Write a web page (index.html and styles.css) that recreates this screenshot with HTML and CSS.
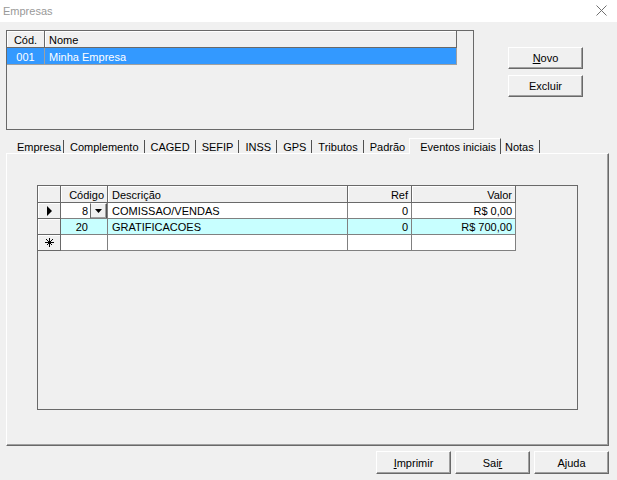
FILE: index.html
```html
<!DOCTYPE html>
<html>
<head>
<meta charset="utf-8">
<title>Empresas</title>
<link rel="stylesheet" href="styles.css">
</head>
<body>
<div class="window">
  <div class="titlebar">
    <span class="title">Empresas</span>
    <svg class="close" width="11" height="11" viewBox="0 0 11 11"><path d="M0.5 0.5L10.5 10.5M10.5 0.5L0.5 10.5" stroke="#707070" stroke-width="1" fill="none"/></svg>
  </div>

  <div class="top">
    <div class="listbox">
      <div class="lb-line">
        <div class="hcell lb-cod">Cód.</div>
        <div class="hcell lb-nome">Nome</div>
      </div>
      <div class="lb-line selected">
        <div class="lcell lb-cod">001</div>
        <div class="lcell lb-nome">Minha Empresa</div>
      </div>
    </div>
    <div class="side-buttons">
      <button class="btn"><u>N</u>ovo</button>
      <button class="btn">Excluir</button>
    </div>
  </div>

  <div class="tabs">
    <div class="tab">Empresa</div>
    <div class="tab">Complemento</div>
    <div class="tab">CAGED</div>
    <div class="tab">SEFIP</div>
    <div class="tab">INSS</div>
    <div class="tab">GPS</div>
    <div class="tab">Tributos</div>
    <div class="tab">Padrão</div>
    <div class="tab active">Eventos iniciais</div>
    <div class="tab">Notas</div>
  </div>

  <div class="panel">
    <div class="grid">
      <div class="c h"></div>
      <div class="c h num">Código</div>
      <div class="c h">Descrição</div>
      <div class="c h num">Ref</div>
      <div class="c h num">Valor</div>

      <div class="c h ind"><svg width="6" height="10" viewBox="0 0 6 10"><path d="M0 0L5 5L0 10Z" fill="#000"/></svg></div>
      <div class="c w cod"><span>8</span><span class="dd"><svg width="7" height="4" viewBox="0 0 7 4"><path d="M0 0H7L3.5 4Z" fill="#000"/></svg></span></div>
      <div class="c w">COMISSAO/VENDAS</div>
      <div class="c w num">0</div>
      <div class="c w num">R$ 0,00</div>

      <div class="c h ind"></div>
      <div class="c cy cod cod-plain">20</div>
      <div class="c cy">GRATIFICACOES</div>
      <div class="c cy num">0</div>
      <div class="c cy num">R$ 700,00</div>

      <div class="c h ind"><svg width="9" height="9" viewBox="0 0 9 9" shape-rendering="crispEdges"><path d="M4.5 0V9M0 4.5H9M1.5 1.5L7.5 7.5M7.5 1.5L1.5 7.5" stroke="#000" stroke-width="1" fill="none"/></svg></div>
      <div class="c w"></div>
      <div class="c w"></div>
      <div class="c w"></div>
      <div class="c w"></div>
    </div>
  </div>

  <div class="bottom">
    <button class="btn big"><u>I</u>mprimir</button>
    <button class="btn big">Sai<u>r</u></button>
    <button class="btn big">Ajuda</button>
  </div>
</div>
</body>
</html>
```

FILE: styles.css
```css
html, body {
  margin: 0;
  padding: 0;
}
body {
  background: #f0f0f0;
  font-family: "Liberation Sans", Arial, sans-serif;
  font-size: 11px;
  color: #000;
}
.window {
  width: 617px;
  height: 480px;
  overflow: hidden;
}

/* title bar */
.titlebar {
  height: 22px;
  background: #fff;
  display: flex;
  align-items: center;
  justify-content: space-between;
  padding: 0 10px 1px 3px;
  box-sizing: border-box;
}
.title {
  color: #999;
  font-size: 11px;
}
.close {
  display: block;
}

/* top area */
.top {
  display: flex;
  align-items: flex-start;
  padding: 8px 0 0 6px;
}
.listbox {
  width: 468px;
  height: 100px;
  box-sizing: border-box;
  border: 1px solid #696969;
  background: #f0f0f0;
}
.lb-line {
  display: flex;
  width: 450px;
  height: 17px;
}
.hcell, .lcell {
  box-sizing: border-box;
  height: 17px;
  line-height: 18px;
  white-space: nowrap;
  overflow: hidden;
}
.hcell {
  border-right: 1px solid #696969;
  border-bottom: 1px solid #696969;
  box-shadow: inset 1px 1px #fff;
}
.lcell {
  border-right: 1px solid #a0a0a0;
  border-bottom: 1px solid #a0a0a0;
}
.lb-cod {
  width: 38px;
  text-align: center;
}
.lb-nome {
  width: 412px;
  padding-left: 4px;
}
.lb-line.selected {
  background: #3399ff;
  color: #fff;
}

.side-buttons {
  display: flex;
  flex-direction: column;
  gap: 6px;
  margin: 17px 0 0 34px;
}
.btn {
  width: 75px;
  height: 22px;
  box-sizing: border-box;
  padding: 0;
  background: #f0f0f0;
  border: 1px solid;
  border-color: #fff #696969 #696969 #fff;
  box-shadow: inset -1px -1px #a0a0a0;
  font-family: inherit;
  font-size: 11px;
  color: #000;
}
.btn.big {
  height: 23px;
}

/* tabs */
.tabs {
  display: flex;
  align-items: flex-end;
  height: 15px;
  margin: 8px 0 0 6px;
  padding-left: 5px;
  position: relative;
  z-index: 1;
}
.tab {
  height: 13px;
  line-height: 15px;
  padding: 0 5px 0 6px;
  border-right: 1px solid #505050;
  white-space: nowrap;
}
.tab:first-child {
  padding-right: 2px;
}
.tab.active {
  height: 16px;
  line-height: 16px;
  margin: 0 -2px -1px -2px;
  padding: 0 4px 0 10px;
  background: #f0f0f0;
  border-left: 1px solid #fff;
  border-top: 1px solid #fff;
  box-sizing: border-box;
  position: relative;
}

/* tab panel */
.panel {
  width: 603px;
  height: 293px;
  margin-left: 6px;
  box-sizing: border-box;
  border: 1px solid;
  border-color: #fff #696969 #696969 #fff;
  box-shadow: inset -1px -1px #a0a0a0;
  padding: 31px 0 0 30px;
}

/* data grid */
.grid {
  width: 541px;
  height: 225px;
  box-sizing: border-box;
  border: 1px solid #696969;
  display: grid;
  grid-template-columns: 23px 47px 240px 64px 104px;
  grid-template-rows: 17px 16px 16px 16px;
  align-content: start;
  background: #f0f0f0;
}
.c {
  box-sizing: border-box;
  border-right: 1px solid #808080;
  border-bottom: 1px solid #808080;
  padding: 0 3px 0 4px;
  line-height: 17px;
  white-space: nowrap;
  overflow: hidden;
}
.c.h {
  background: #f0f0f0;
  border-color: #696969;
  box-shadow: inset 1px 1px #fff;
  line-height: 18px;
}
.c.w {
  background: #fff;
}
.c.cy {
  background: #c8ffff;
}
.c.num {
  text-align: right;
}
.c.ind {
  display: flex;
  align-items: center;
  justify-content: center;
}
.c.cod {
  display: flex;
  justify-content: flex-end;
  align-items: center;
  padding: 1px 0 0 0;
}
.c.cod-plain {
  padding-right: 19px;
}
.dd {
  width: 17px;
  height: 16px;
  margin: -1px 0 0 2px;
  box-sizing: border-box;
  background: #f0f0f0;
  border: 1px solid;
  border-color: #fff #505050 #505050 #696969;
  box-shadow: inset -1px -1px #a0a0a0;
  display: flex;
  align-items: center;
  justify-content: center;
}
.dd svg {
  display: block;
}

/* bottom buttons */
.bottom {
  display: flex;
  justify-content: flex-end;
  gap: 4px;
  width: 603px;
  margin: 5px 0 0 6px;
}
```
